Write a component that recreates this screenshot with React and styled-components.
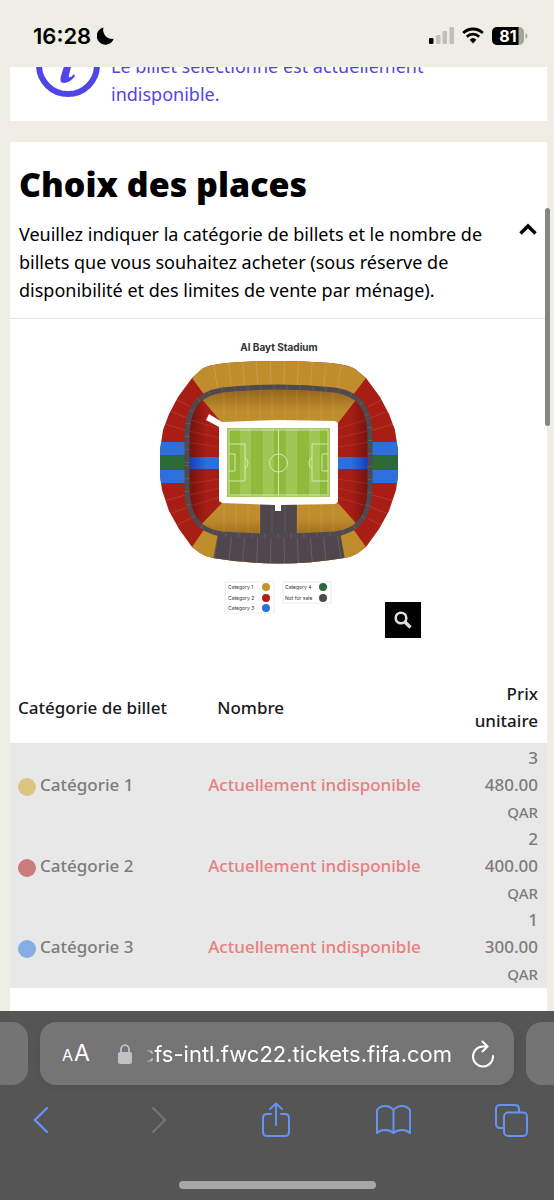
import React, { useState } from 'react';
import styled, { createGlobalStyle } from 'styled-components';

const GlobalStyle = createGlobalStyle`
	* {
		box-sizing: border-box;
	}
	body {
		margin: 0;
		background: #eeeee4;
		font-family: 'Noto Sans', 'Open Sans', sans-serif;
		color: #000;
	}
	button {
		padding: 0;
		border: 0;
		background: none;
		color: inherit;
		cursor: pointer;
	}
	svg {
		display: block;
	}
`;

const Page = styled.div`
	position: relative;
	display: flex;
	flex-direction: column;
	min-height: 100vh;
`;

const StatusBar = styled.header`
	display: flex;
	align-items: center;
	justify-content: space-between;
	height: 67px;
	padding: 4px 26px 0 33px;
`;

const StatusGroup = styled.div`
	display: flex;
	align-items: center;
	gap: ${props => props.$gap}px;
`;

const Clock = styled.span`
	font: 600 22px/28px Inter, sans-serif;
`;

const Content = styled.main`
	flex: 1;
	display: flex;
	flex-direction: column;
	gap: 21px;
	padding: 0 7px 0 10px;
`;

const Notice = styled.section`
	display: flex;
	align-items: flex-end;
	gap: 11px;
	height: 54px;
	padding: 0 26px 13px;
	overflow: hidden;
	background: #fff;
	color: #4f46e8;
`;

const NoticeIcon = styled.svg`
	flex: none;
	margin-bottom: 11px;
`;

const NoticeText = styled.p`
	margin: 0;
	max-width: 340px;
	font-size: 18px;
	line-height: 28px;
`;

const Card = styled.section`
	flex: 1;
	background: #fff;
`;

const CardHeader = styled.div`
	padding: 22px 9px 14px;
	border-bottom: 1px solid #e4e4e2;
`;

const Title = styled.h1`
	margin: 0 0 16px;
	font-size: 34px;
	font-weight: 900;
	line-height: 40px;
`;

const Intro = styled.div`
	display: flex;
	align-items: flex-start;
	justify-content: space-between;
`;

const IntroText = styled.p`
	margin: 0;
	max-width: 480px;
	font-size: 18px;
	line-height: 28px;
`;

const Toggle = styled.button`
	padding: 2px 1px;
`;

const Figure = styled.figure`
	position: relative;
	display: flex;
	justify-content: center;
	margin: 0;
	padding: 16px 0 60px;
`;

const ZoomButton = styled.button`
	position: absolute;
	left: calc(50% + 106px);
	bottom: 42px;
	display: grid;
	place-items: center;
	width: 36px;
	height: 36px;
	background: #000;
`;

const Table = styled.table`
	width: 100%;
	border-collapse: collapse;
	font-size: 17px;
	font-weight: 500;
	line-height: 27px;
`;

const HeadCell = styled.th`
	padding: 0 9px 9px ${props => props.$indent}px;
	width: ${props => props.$width};
	font-weight: 500;
	text-align: ${props => (props.$right ? 'right' : 'left')};
	color: #1a1a1a;
`;

const Cell = styled.td`
	padding: 0 9px 0 ${props => props.$indent}px;
	text-align: ${props => (props.$right ? 'right' : 'left')};
`;

const Row = styled.tr`
	background: #e8e8e8;
	color: #7c7c7c;

	&:first-child ${Cell} {
		padding-top: 1px;
	}
	&:last-child ${Cell} {
		padding-bottom: 1px;
	}
`;

const Category = styled.span`
	display: flex;
	align-items: center;
	gap: 4px;
`;

const Dot = styled.span`
	width: 18px;
	height: 18px;
	margin-top: 5px;
	border-radius: 50%;
	background: ${props => props.$color};
`;

const Unavailable = styled.span`
	color: #e97f80;
`;

const Currency = styled.span`
	font-size: 15px;
	line-height: 16px;
`;

const ScrollThumb = styled.div`
	position: absolute;
	top: 208px;
	right: 4px;
	width: 5px;
	height: 218px;
	border-radius: 3px;
	background: #858583;
`;

const BrowserBar = styled.footer`
	height: 189px;
	padding-top: 11px;
	background: #555;
	color: #fff;
`;

const Tabs = styled.div`
	display: flex;
	gap: 12px;
`;

const TabEdge = styled.div`
	flex: none;
	width: 28px;
	height: 63px;
	border-radius: ${props => (props.$right ? '16px 0 0 16px' : '0 16px 16px 0')};
	background: #747474;
`;

const AddressBar = styled.div`
	flex: 1;
	min-width: 0;
	display: flex;
	align-items: center;
	height: 63px;
	padding: 0 20px 0 22px;
	border-radius: 16px;
	background: #757575;
	box-shadow: 0 2px 10px rgba(0, 0, 0, 0.08);
`;

const TextSize = styled.button`
	margin-right: 28px;
	font: 400 23px/28px Inter, sans-serif;

	small {
		margin-right: 1px;
		font-size: 16px;
	}
`;

const Address = styled.input`
	flex: 1;
	min-width: 0;
	margin: 0 20px 0 6px;
	padding: 0;
	border: 0;
	background: none;
	color: #fff;
	font: 400 22px/28px Inter, sans-serif;
	text-align: right;
	-webkit-mask-image: linear-gradient(90deg, transparent 8px, #000 18px);
	mask-image: linear-gradient(90deg, transparent 8px, #000 18px);
`;

const Toolbar = styled.nav`
	display: flex;
	align-items: center;
	justify-content: space-between;
	padding: 17px 25px 0 23px;
	color: #6493f2;
`;

const ToolButton = styled.button`
	display: grid;
	place-items: center;
	width: ${props => props.$width ?? 36}px;
	height: 36px;
	color: ${props => (props.disabled ? '#757575' : 'inherit')};
`;

const HomeIndicator = styled.div`
	width: 197px;
	height: 8px;
	margin: 43px auto 0;
	border-radius: 4px;
	background: #a6a6a6;
`;

const categories = [
	{ name: 'Catégorie 1', color: '#dcc481', price: ['3', '480.00'] },
	{ name: 'Catégorie 2', color: '#c97c7b', price: ['2', '400.00'] },
	{ name: 'Catégorie 3', color: '#86aee6', price: ['1', '300.00'] },
];

const legend = [
	{ label: 'Category 1', color: '#c4912f', x: 228, y: 587 },
	{ label: 'Category 2', color: '#b01c16', x: 228, y: 598 },
	{ label: 'Category 3', color: '#2f6fdc', x: 228, y: 608 },
	{ label: 'Category 4', color: '#2b6a37', x: 285, y: 587 },
	{ label: 'Not for sale', color: '#504a4d', x: 285, y: 598 },
];

const GOLD = '#c08d2d';
const RED = '#a81d14';
const BLUE = '#2f6fdc';
const GREEN = '#2b6a37';
const GREY = '#50474c';

const OUTER =
	'M192 378L202 369Q207 365 226 363Q278 359 331 363Q350 365 355 369L366 378L380 397L389 414L395 430L398 450V476L396 490L389 511L379 529L366 547L358 553Q352 557 344 558Q278 569 213 558Q206 557 200 553L192 547L179 529L169 511L162 490L160 476V450L163 430L169 414L178 397Z';
const RING =
	'M187 463V440C187 406 198 394 222 390Q278 384 335 390C359 394 370 406 370 440V486C370 516 359 531 335 534Q278 538 222 534C198 531 187 516 187 486Z';

function Stadium() {
	return (
		<svg width="258" height="285" viewBox="150 335 258 285" role="img" aria-label="Al Bayt Stadium">
			<defs>
				<clipPath id="outer">
					<path d={OUTER} />
				</clipPath>
				<clipPath id="bowl">
					<path d={RING} />
				</clipPath>
				<linearGradient id="goldTop" x1="0" y1="0" x2="0" y2="1">
					<stop offset="0" stopColor="#8a5c18" />
					<stop offset="0.7" stopColor={GOLD} />
				</linearGradient>
				<linearGradient id="goldBottom" x1="0" y1="1" x2="0" y2="0">
					<stop offset="0" stopColor="#94651c" />
					<stop offset="0.6" stopColor={GOLD} />
				</linearGradient>
				<linearGradient id="redLeft">
					<stop offset="0" stopColor="#6d120e" />
					<stop offset="0.6" stopColor={RED} />
				</linearGradient>
				<linearGradient id="redRight">
					<stop offset="0.4" stopColor={RED} />
					<stop offset="1" stopColor="#6d120e" />
				</linearGradient>
				<linearGradient id="blueLeft">
					<stop offset="0" stopColor="#1535ad" />
					<stop offset="0.6" stopColor={BLUE} />
				</linearGradient>
				<linearGradient id="blueRight">
					<stop offset="0.4" stopColor={BLUE} />
					<stop offset="1" stopColor="#1535ad" />
				</linearGradient>
			</defs>
			<text x="279" y="351" textAnchor="middle" fontFamily="Inter, sans-serif" fontSize="10" fontWeight="700" fill="#333">
				Al Bayt Stadium
			</text>
			<g clipPath="url(#outer)">
				<rect x="158" y="358" width="242" height="210" fill={RED} />
				<path d="M192 378L214 408H343L366 378V355H192Z" fill={GOLD} />
				<path d="M192 547L214 515H343L366 547V568H192Z" fill={GOLD} />
				<path d="M218 532L213 560V568H345V560L340 532Z" fill={GREY} />
				<path d="M158 442H190V483H158ZM368 442H400V483H368Z" fill={BLUE} />
				<path d="M158 455H190V470H158ZM368 455H400V470H368Z" fill={GREEN} />
				<g stroke="#fff" strokeOpacity="0.22" strokeWidth="0.6">
					{[218, 232, 245, 258, 271, 284, 297, 310, 323, 337].map(x => (
						<path key={x} d={`M${x} 392L${x + (x - 278) * 0.08} 360M${x} 532L${x + (x - 278) * 0.08} 566`} />
					))}
					{[399, 413, 427, 498, 512, 526].map(y => (
						<path
							key={y}
							d={`M190 ${y + (463 - y) * 0.12}L156 ${y - (463 - y) * 0.15}M368 ${y + (463 - y) * 0.12}L402 ${
								y - (463 - y) * 0.15
							}`}
						/>
					))}
				</g>
			</g>
			<g clipPath="url(#bowl)">
				<rect x="187" y="386" width="33" height="150" fill="url(#redLeft)" />
				<rect x="337" y="386" width="34" height="150" fill="url(#redRight)" />
				<path d="M196 392L222 423H338L362 392V384H196Z" fill="url(#goldTop)" />
				<path d="M196 530L222 503H338L362 530V540H196Z" fill="url(#goldBottom)" />
				<path d="M260 503H297V540H260Z" fill={GREY} />
				<rect x="187" y="457" width="33" height="12" fill="url(#blueLeft)" />
				<rect x="337" y="457" width="34" height="12" fill="url(#blueRight)" />
				<g stroke="#fff" strokeOpacity="0.16" strokeWidth="0.6">
					{[224, 236, 248, 260, 272, 285, 297, 309, 321, 333].map(x => (
						<path key={x} d={`M${x} 387V423M${x} 503V538`} />
					))}
					{[429, 438, 447, 479, 488, 497].map(y => (
						<path
							key={y}
							d={`M187 ${y - (463 - y) * 0.3}L220 ${y}M370 ${y - (463 - y) * 0.3}L337 ${y}`}
						/>
					))}
				</g>
			</g>
			<path d={RING} fill="none" stroke="#50494f" strokeWidth="5" />
			<path d={RING} fill="none" stroke="#777078" strokeWidth="5" strokeDasharray="1 12" strokeOpacity="0.5" />
			<path d="M222 422L278 420L335 421L338 423V502L335 504L281 505V511H275V505L222 503L219 501V427L206 420L209 414Z" fill="#fff" />
			<rect x="227" y="428" width="103" height="69" fill="#a6c763" />
			<rect x="228" y="429" width="101" height="67" fill="#8fba3c" />
			{[240, 263, 286, 309].map(x => (
				<rect key={x} x={x} y="429" width="11" height="67" fill="#a0c755" />
			))}
			<g fill="none" stroke="#dcebb9" strokeWidth="0.9">
				<rect x="229" y="430" width="99" height="65" />
				<path d="M278.500 430V495M229 444H245V481H229M229 454H235V471H229M328 444H312V481H328M328 454H322V471H328M245 457Q251 463 245 469M312 457Q306 463 312 469" />
				<circle cx="278.500" cy="463" r="9" />
			</g>
			<g fill="none" stroke="#ececec" strokeWidth="1">
				<rect x="225" y="582" width="49" height="31" />
				<rect x="283" y="582" width="48" height="21" />
			</g>
			{legend.map(item => (
				<g key={item.label}>
					<text x={item.x} y={item.y + 2} fontFamily="Inter, sans-serif" fontSize="5" fill="#333">
						{item.label}
					</text>
					<circle cx={item.x + 38} cy={item.y} r="4" fill={item.color} />
				</g>
			))}
		</svg>
	);
}

function App() {
	const [open, setOpen] = useState(true);

	return (
		<>
			<GlobalStyle />
			<Page>
				<StatusBar>
					<StatusGroup $gap={6}>
						<Clock>16:28</Clock>
						<svg width="17" height="18" viewBox="0 0 17 18">
							<path d="M6.500 0.500A9 9 0 0 0 16.700 11.800A8.700 8.700 0 1 1 6.500 0.500Z" />
						</svg>
					</StatusGroup>
					<StatusGroup $gap={8}>
						<svg width="25" height="17" viewBox="0 0 25 17">
							<rect x="0" y="11" width="4.500" height="6" rx="1.200" />
							<g fill="#bfc0b8">
								<rect x="7" y="8" width="4.500" height="9" rx="1.200" />
								<rect x="13.500" y="4" width="4.500" height="13" rx="1.200" />
								<rect x="20.500" y="0" width="4.500" height="17" rx="1.200" />
							</g>
						</svg>
						<svg width="22" height="17" viewBox="0 0 22 17">
							<g fill="none" stroke="#000" strokeWidth="2.800">
								<path d="M1.200 6A14 14 0 0 1 20.800 6" />
								<path d="M4.800 9.700A9 9 0 0 1 17.200 9.700" />
							</g>
							<path d="M7.600 12.700A5 5 0 0 1 14.400 12.700L11 16.500Z" />
						</svg>
						<svg width="36" height="18" viewBox="0 0 36 18">
							<defs>
								<clipPath id="battery">
									<rect width="32" height="18" rx="5" />
								</clipPath>
							</defs>
							<g clipPath="url(#battery)">
								<rect width="32" height="18" fill="#a3a49e" />
								<rect width="26.500" height="18" />
							</g>
							<path d="M33.500 6Q35.500 7 35.500 9T33.500 12Z" fill="#a3a49e" />
							<text x="16" y="14.500" textAnchor="middle" fontFamily="Inter, sans-serif" fontSize="16" fontWeight="700" fill="#fff">
								81
							</text>
						</svg>
					</StatusGroup>
				</StatusBar>
				<Content>
					<Notice>
						<NoticeIcon width="64" height="64" viewBox="0 0 64 64">
							<circle cx="32" cy="32" r="29" fill="none" stroke="currentColor" strokeWidth="6" />
							<path
								d="M27 24Q32 24 38 21L33 42Q32 45 35 44L38 41L39 43Q34 50 28 50Q23 50 25 43L29 30Q30 26 26 27Z"
								fill="currentColor"
							/>
						</NoticeIcon>
						<NoticeText>Le billet sélectionné est actuellement indisponible.</NoticeText>
					</Notice>
					<Card>
						<CardHeader>
							<Title>Choix des places</Title>
							<Intro>
								<IntroText>
									Veuillez indiquer la catégorie de billets et le nombre de billets que vous souhaitez
									acheter (sous réserve de disponibilité et des limites de vente par ménage).
								</IntroText>
								<Toggle aria-label="Choix des places" aria-expanded={open} onClick={() => setOpen(!open)}>
									<svg width="18" height="14" viewBox="0 0 18 14">
										<path d="M1.500 11.500L9 4L16.500 11.500" fill="none" stroke="#000" strokeWidth="3.400" />
									</svg>
								</Toggle>
							</Intro>
						</CardHeader>
						{open && (
							<>
								<Figure>
									<Stadium />
									<ZoomButton aria-label="Zoom">
										<svg width="18" height="18" viewBox="0 0 18 18" fill="none" stroke="#ddd">
											<circle cx="7" cy="7" r="5.300" strokeWidth="2.600" />
											<path d="M11 11L16.500 16.500" strokeWidth="3.400" />
										</svg>
									</ZoomButton>
								</Figure>
								<Table>
									<thead>
										<tr>
											<HeadCell $indent={8} $width="36%">
												Catégorie de billet
											</HeadCell>
											<HeadCell $indent={14} $width="45%">
												Nombre
											</HeadCell>
											<HeadCell $indent={0} $right>
												Prix unitaire
											</HeadCell>
										</tr>
									</thead>
									<tbody>
										{categories.map(category => (
											<Row key={category.name}>
												<Cell $indent={8}>
													<Category>
														<Dot $color={category.color} />
														{category.name}
													</Category>
												</Cell>
												<Cell $indent={5}>
													<Unavailable>Actuellement indisponible</Unavailable>
												</Cell>
												<Cell $indent={40} $right>
													{category.price.join(' ')} <Currency>QAR</Currency>
												</Cell>
											</Row>
										))}
									</tbody>
								</Table>
							</>
						)}
					</Card>
				</Content>
				<ScrollThumb />
				<BrowserBar>
					<Tabs>
						<TabEdge />
						<AddressBar>
							<TextSize aria-label="AA">
								<small>A</small>A
							</TextSize>
							<svg width="14" height="20" viewBox="0 0 14 20">
								<rect y="8" width="14" height="12" rx="2" fill="#c1c1c6" />
								<path d="M3 9V5.500A4 4.300 0 0 1 11 5.500V9" fill="none" stroke="#c1c1c6" strokeWidth="1.800" />
							</svg>
							<Address aria-label="URL" readOnly value="cfs-intl.fwc22.tickets.fifa.com" />
							<ToolButton $width={22} aria-label="Reload">
								<svg width="22" height="28" viewBox="0 0 22 28" fill="none" stroke="#fff" strokeWidth="2" strokeLinecap="round">
									<path d="M14.500 6.500H11A10 10 0 1 0 21 16M10.500 1.500L15.500 6.500L10.500 11.500" />
								</svg>
							</ToolButton>
						</AddressBar>
						<TabEdge $right />
					</Tabs>
					<Toolbar>
						<ToolButton aria-label="Back">
							<svg width="18" height="30" viewBox="0 0 18 30" fill="none" stroke="currentColor" strokeWidth="2.400" strokeLinecap="round">
								<path d="M15 3L3 15L15 27" />
							</svg>
						</ToolButton>
						<ToolButton aria-label="Forward" disabled>
							<svg width="18" height="30" viewBox="0 0 18 30" fill="none" stroke="currentColor" strokeWidth="2" strokeLinecap="round">
								<path d="M3 3L15 15L3 27" />
							</svg>
						</ToolButton>
						<ToolButton aria-label="Share">
							<svg width="28" height="36" viewBox="0 0 28 36" fill="none" stroke="currentColor" strokeWidth="2" strokeLinecap="round">
								<path d="M9 12H5Q1 12 1 16V30Q1 34 5 34H23Q27 34 27 30V16Q27 12 23 12H19M14 23V2M8 7L14 1.500L20 7" />
							</svg>
						</ToolButton>
						<ToolButton aria-label="Bookmarks">
							<svg width="35" height="32" viewBox="0 0 35 32" fill="none" stroke="currentColor" strokeWidth="2" strokeLinejoin="round">
								<path d="M17.500 6Q14 2 9 2T1 6V29Q4 26 9 26T17.500 29Q21 26 26 26T34 29V6Q31 2 26 2T17.500 6V29" />
							</svg>
						</ToolButton>
						<ToolButton aria-label="Tabs">
							<svg width="33" height="33" viewBox="0 0 33 33" fill="none" stroke="currentColor" strokeWidth="2">
								<path d="M8.500 24H5Q1 24 1 20V5Q1 1 5 1H20Q24 1 24 5V8.500" />
								<rect x="9" y="8.500" width="23" height="23.500" rx="4" />
							</svg>
						</ToolButton>
					</Toolbar>
					<HomeIndicator />
				</BrowserBar>
			</Page>
		</>
	);
}

export default App;
